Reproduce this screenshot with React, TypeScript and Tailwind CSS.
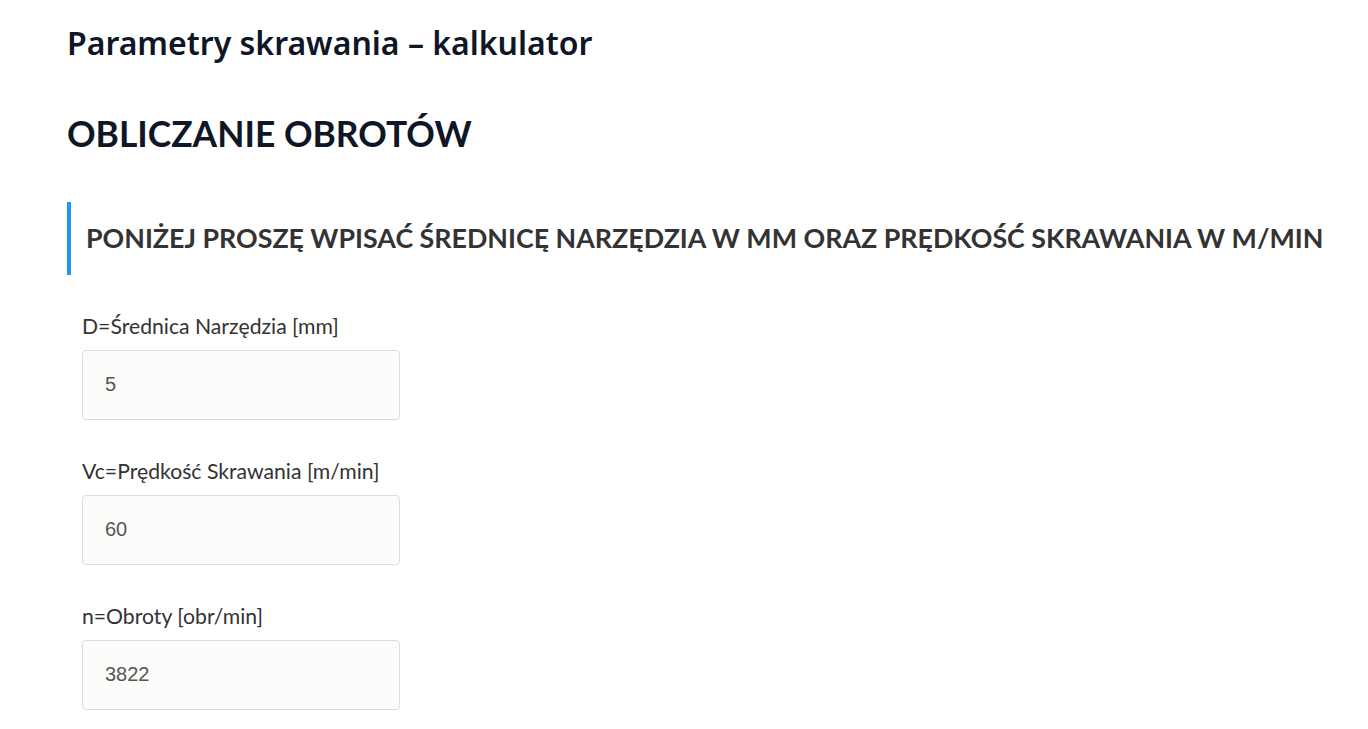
import { useState } from "react";

function Field({ label, value, onChange, readOnly }: { label: string; value: string; onChange?: (v: string) => void; readOnly?: boolean }) {
  return (
    <div className="mb-[36px]">
      <label className="block text-[21.2px] leading-[30px] text-[#333] mb-[9px]">{label}</label>
      <input
        className="block w-[318px] h-[70px] rounded-[4px] border border-[#ddd] bg-[#fcfdfb] px-[22px] pb-[2px] text-[20px] text-[#555] font-['Liberation_Sans',Arial,sans-serif] outline-none"
        value={value}
        readOnly={readOnly}
        onChange={(e) => onChange?.(e.target.value)}
      />
    </div>
  );
}

export default function App() {
  const [d, setD] = useState("5");
  const [vc, setVc] = useState("60");
  const dn = parseFloat(d);
  const vn = parseFloat(vc);
  // obroty: n = Vc * 1000 / (3.14 * D)
  const n = dn > 0 && vn >= 0 ? Math.round((vn * 1000) / (3.14 * dn)).toString() : "";

  return (
    <div className="min-h-screen bg-white font-['Lato','Open_Sans',sans-serif] pl-[67px] pt-[22px]">
      <h1 className="font-['Noto_Sans',sans-serif] font-semibold text-[32px] leading-[42px] text-[#0f1626]">
        Parametry skrawania – kalkulator
      </h1>
      <h2 className="mt-[48px] text-[35.4px] leading-[44px] font-bold text-[#0f1626]">OBLICZANIE OBROTÓW</h2>
      <div className="mt-[46px] border-l-4 border-[#2196f3] pl-[15px] py-[20px]">
        <h3 className="text-[26.8px] leading-[33px] font-bold text-[#333]">
          PONIŻEJ PROSZĘ WPISAĆ ŚREDNICĘ NARZĘDZIA W MM ORAZ PRĘDKOŚĆ SKRAWANIA W M/MIN
        </h3>
      </div>
      <div className="mt-[36px] pl-[15px]">
        <Field label="D=Średnica Narzędzia [mm]" value={d} onChange={setD} />
        <Field label="Vc=Prędkość Skrawania [m/min]" value={vc} onChange={setVc} />
        <Field label="n=Obroty [obr/min]" value={n} readOnly />
      </div>
    </div>
  );
}
